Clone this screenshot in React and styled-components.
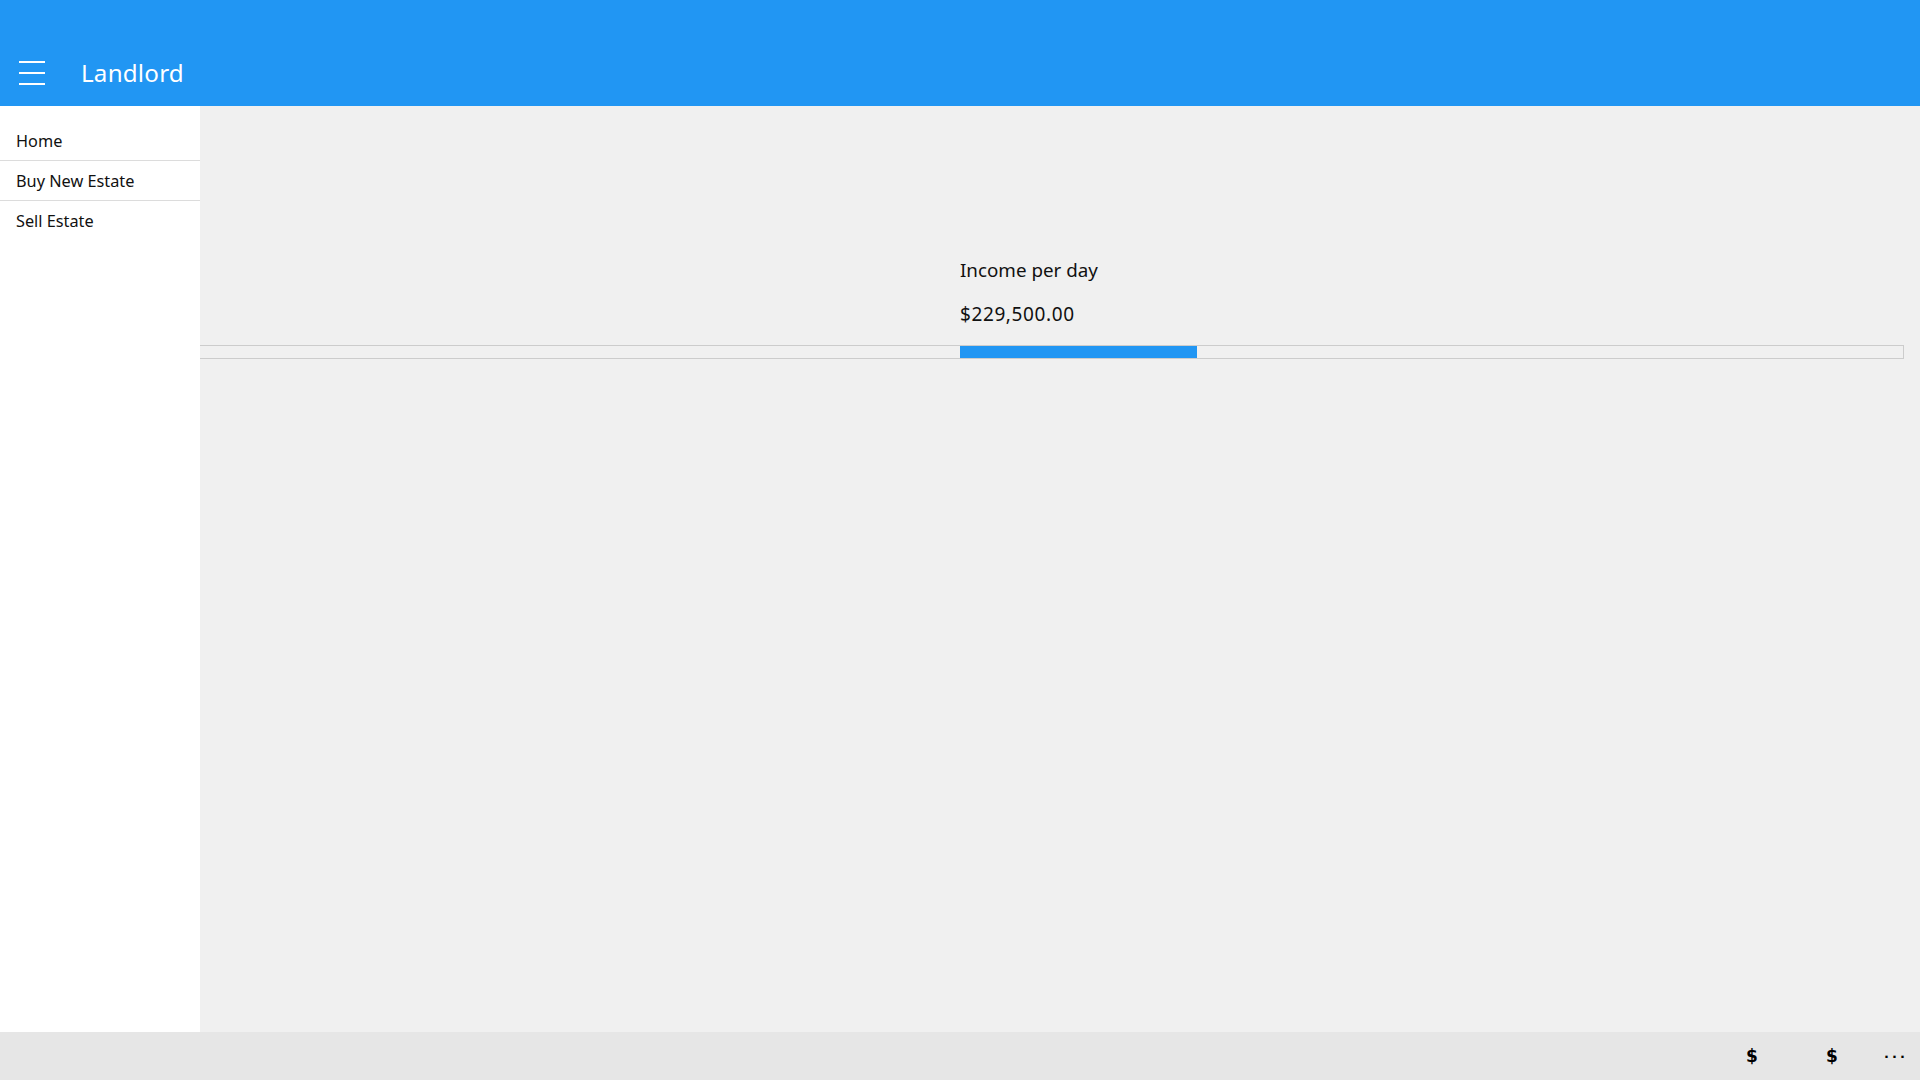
import styled, { createGlobalStyle } from "styled-components";

const Global = createGlobalStyle`
html,body{margin:0;padding:0;height:100%;}
body{font-family:"Noto Sans","Open Sans",sans-serif;background:#f0f0f0;color:#111;}
#root{height:100%;}
`;

const Pagina = styled.div`
height:100vh;display:flex;flex-direction:column;`;

const Topo = styled.header`
height:106px;flex:none;background:#2196f3;color:#fff;
display:flex;align-items:flex-end;padding-bottom:13px;box-sizing:border-box;`;

const BotaoMenu = styled.button`
width:64px;height:40px;border:none;background:transparent;padding:0 0 0 19px;
display:flex;flex-direction:column;justify-content:center;gap:9px;cursor:pointer;
span{display:block;width:26px;height:2px;background:#fff;}
`;

const Titulo = styled.h1`
margin:0 0 0 17px;font-size:24.2px;font-weight:400;line-height:40px;letter-spacing:.2px;`;

const Corpo = styled.div`flex:1;display:flex;min-height:0;`;

const Lateral = styled.nav`
width:200px;flex:none;background:#fff;padding-top:15px;box-sizing:border-box;`;

const ItemMenu = styled.div`
height:39px;display:flex;align-items:center;padding-left:16px;font-size:16.3px;
border-bottom:${p => (p.ultimo ? "none" : "1px solid #dcdcdc")};cursor:pointer;`;

const Conteudo = styled.main`
flex:1;padding:150px 16px 0 0;`;

const Bloco = styled.div`padding-left:760px;`;

const Rotulo = styled.div`font-size:18.8px;line-height:28px;margin-bottom:17px;`;
const Valor = styled.div`font-size:19px;line-height:26px;margin-bottom:18px;letter-spacing:.6px;`;

const Trilho = styled.div`
height:14px;border:1px solid #cccccc;border-left:none;box-sizing:border-box;
background:#f0f0f0;position:relative;`;

const Preenchido = styled.div`
position:absolute;top:0;bottom:0;background:#2196f3;`;

const Rodape = styled.footer`
height:48px;flex:none;background:#e6e6e6;display:flex;justify-content:flex-end;`;

const BotaoBarra = styled.button`
width:${p => (p.estreito ? "48px" : "80px")};height:48px;border:none;background:transparent;
display:flex;align-items:center;justify-content:center;padding:0;cursor:pointer;
font-family:"DejaVu Sans",sans-serif;font-size:${p => (p.estreito ? "13px" : "17px")};
font-weight:700;color:#000;letter-spacing:${p => (p.estreito ? "3px" : "0")};
`;

export default function App() {
  const menu = ["Home", "Buy New Estate", "Sell Estate"];
  const progresso = { inicio: 760, largura: 237 };
  return (
    <Pagina>
      <Global />
      <Topo>
        <BotaoMenu aria-label="menu">
          <span />
          <span />
          <span />
        </BotaoMenu>
        <Titulo>Landlord</Titulo>
      </Topo>
      <Corpo>
        <Lateral>
          {menu.map((m, i) => (
            <ItemMenu key={m} ultimo={i === menu.length - 1}>{m}</ItemMenu>
          ))}
        </Lateral>
        <Conteudo>
          <Bloco>
            <Rotulo>Income per day</Rotulo>
            <Valor>$229,500.00</Valor>
          </Bloco>
          <Trilho>
            <Preenchido style={{ left: progresso.inicio, width: progresso.largura }} />
          </Trilho>
        </Conteudo>
      </Corpo>
      <Rodape>
        <BotaoBarra>$</BotaoBarra>
        <BotaoBarra>$</BotaoBarra>
        <BotaoBarra estreito>···</BotaoBarra>
      </Rodape>
    </Pagina>
  );
}
